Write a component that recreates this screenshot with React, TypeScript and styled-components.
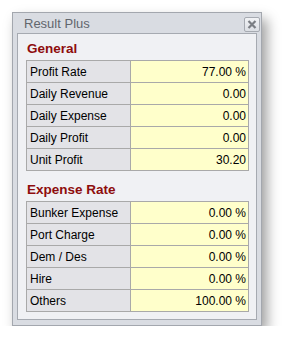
import styled, { createGlobalStyle } from "styled-components";

const GlobalStyle = createGlobalStyle`
  body {
    margin: 0;
    background: #ffffff;
    font-family: "Liberation Sans", sans-serif;
  }
`;

const general = [
  { label: "Profit Rate", value: "77.00 %" },
  { label: "Daily Revenue", value: "0.00" },
  { label: "Daily Expense", value: "0.00" },
  { label: "Daily Profit", value: "0.00" },
  { label: "Unit Profit", value: "30.20" },
];

const expense = [
  { label: "Bunker Expense", value: "0.00 %" },
  { label: "Port Charge", value: "0.00 %" },
  { label: "Dem / Des", value: "0.00 %" },
  { label: "Hire", value: "0.00 %" },
  { label: "Others", value: "100.00 %" },
];

export default function App() {
  return (
    <Page>
      <GlobalStyle />
      <Window>
        <TitleBar>
          <Title>Result Plus</Title>
          <CloseButton>
            <svg width="10" height="9" viewBox="0 0 10 9">
              <path d="M1.5 1 L8.5 8 M8.5 1 L1.5 8" stroke="#7b7e84" strokeWidth="2.2" />
            </svg>
          </CloseButton>
        </TitleBar>
        <Panel>
          <Heading>General</Heading>
          <Grid>
            {general.map((r) => (
              <Row key={r.label}>
                <Label>{r.label}</Label>
                <Value>{r.value}</Value>
              </Row>
            ))}
          </Grid>
          <Heading $second>Expense Rate</Heading>
          <Grid>
            {expense.map((r) => (
              <Row key={r.label}>
                <Label>{r.label}</Label>
                <Value>{r.value}</Value>
              </Row>
            ))}
          </Grid>
        </Panel>
      </Window>
    </Page>
  );
}

const Page = styled.div`
  padding: 12px 0 0 12px;
`;

const Window = styled.div`
  width: 250px;
  height: 314px;
  box-sizing: border-box;
  border: 1px solid #a3a7ae;
  background: #d9dce2;
  padding: 0 4px 5px 4px;
  display: flex;
  flex-direction: column;
  box-shadow: 5px 7px 12px rgba(0, 0, 0, 0.38);
`;

const TitleBar = styled.div`
  height: 20px;
  display: flex;
  align-items: center;
  justify-content: space-between;
  padding-left: 7px;
`;

const Title = styled.span`
  font-size: 13px;
  color: #62666d;
  margin-top: 1px;
`;

const CloseButton = styled.div`
  width: 14px;
  height: 13px;
  border: 1px solid #a6aab1;
  border-radius: 2px;
  background: linear-gradient(#f1f2f5, #dcdfe4);
  display: flex;
  align-items: center;
  justify-content: center;
  margin-right: -3px;
  margin-top: 3px;
`;

const Panel = styled.div`
  flex: 1;
  border: 1px solid #a6aab1;
  background: #f0f1f4;
  padding: 4px 7px 0 8px;
`;

const Heading = styled.div<{ $second?: boolean }>`
  font-weight: bold;
  font-size: 13.5px;
  color: #8e0d0d;
  padding-left: 1px;
  height: 22px;
  line-height: 22px;
  margin-top: ${(p) => (p.$second ? "8px" : "0")};
`;

const Grid = styled.div`
  width: 223px;
  border-top: 1px solid #a9a9a9;
  border-left: 1px solid #a9a9a9;
  box-sizing: border-box;
`;

const Row = styled.div`
  display: grid;
  grid-template-columns: 104px 1fr;
  height: 22px;
`;

const Cell = styled.div`
  border-right: 1px solid #a9a9a9;
  border-bottom: 1px solid #a9a9a9;
  font-size: 12px;
  color: #000;
  display: flex;
  align-items: center;
`;

const Label = styled(Cell)`
  background: #e3e3e7;
  padding-left: 3px;
`;

const Value = styled(Cell)`
  background: #ffffcb;
  justify-content: flex-end;
  padding-right: 2px;
`;
